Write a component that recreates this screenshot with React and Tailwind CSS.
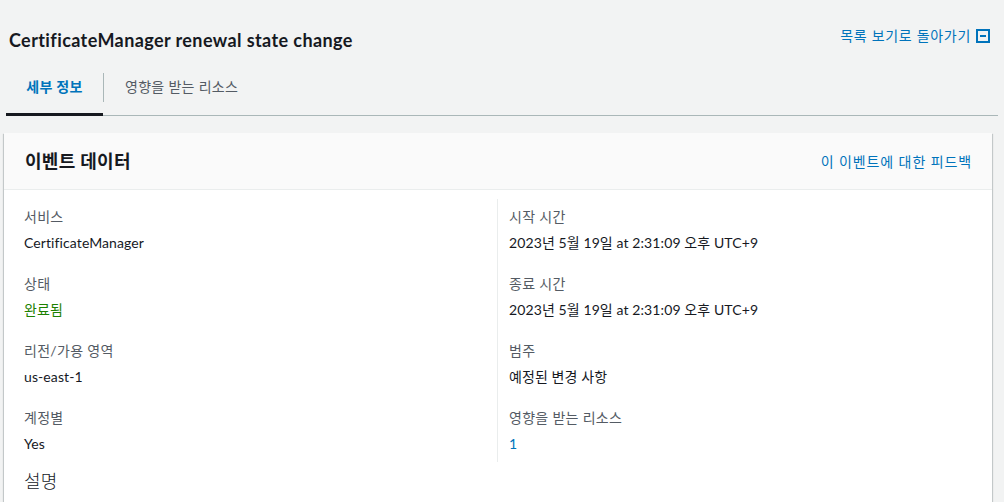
export default function App() {
  const left = [
    { label: "서비스", value: "CertificateManager" },
    { label: "상태", value: "완료됨", cls: "text-[#1d8102]" },
    { label: "리전/가용 영역", value: "us-east-1" },
    { label: "계정별", value: "Yes" },
  ];
  const right = [
    { label: "시작 시간", value: "2023년 5월 19일 at 2:31:09 오후 UTC+9" },
    { label: "종료 시간", value: "2023년 5월 19일 at 2:31:09 오후 UTC+9" },
    { label: "범주", value: "예정된 변경 사항" },
    { label: "영향을 받는 리소스", value: "1", cls: "text-[#0073bb]" },
  ];

  const Field = ({ label, value, cls, last }) => (
    <div className={last ? "" : "h-[67px]"}>
      <p className="text-[14px] leading-[20px] text-[#545b64] tracking-[0.3px]">{label}</p>
      <p className={`text-[14px] leading-[20px] mt-[6px] tracking-[0.1px] ${cls || "text-[#16191f]"}`}>{value}</p>
    </div>
  );

  return (
    <div
      className="w-[1004px] h-[502px] overflow-hidden bg-[#f2f3f3] text-[#16191f]"
      style={{ fontFamily: 'Lato, "Noto Sans CJK KR", sans-serif' }}
    >
      {/* Header */}
      <div className="flex justify-between pl-[9px] pr-[14px] pt-[27px]">
        <h1 className="text-[18px] leading-[26px] font-bold tracking-[0.4px]">CertificateManager renewal state change</h1>
        <a className="flex items-center gap-[5px] text-[14px] leading-[18px] tracking-[0.7px] text-[#0073bb] h-[18px]">
          목록 보기로 돌아가기
          <svg className="w-[14px] h-[14px]" viewBox="0 0 14 14">
            <rect x="1" y="1" width="12" height="12" fill="none" stroke="#0073bb" strokeWidth="2" />
            <rect x="4" y="6" width="6" height="2" fill="#0073bb" />
          </svg>
        </a>
      </div>

      {/* Tabs */}
      <div className="mx-[6px] mt-[17px] flex items-start border-b border-[#aab7b8] h-[46px]">
        <div className="w-[97px] h-[46px] pt-[7px] text-center border-b-[3px] border-[#16191f] text-[14px] leading-[20px] font-bold tracking-[0.3px] text-[#0073bb]">
          세부 정보
        </div>
        <div className="w-px h-[29px] mt-[3px] bg-[#aab7b8]" />
        <div className="pt-[7px] px-[21px] text-[14px] leading-[20px] tracking-[0.3px] text-[#545b64]">
          영향을 받는 리소스
        </div>
      </div>

      {/* Card */}
      <div className="ml-[4px] mr-[12px] mt-[17px] pb-[40px] bg-white shadow-[0_1px_1px_0_rgba(0,28,36,0.3),1px_1px_1px_0_rgba(0,28,36,0.15),-1px_1px_1px_0_rgba(0,28,36,0.15)]">
        <div className="h-[57px] bg-[#fafafa] border-b border-[#eaeded] flex items-center justify-between pl-[21px] pr-[20px]">
          <h2 className="text-[18px] font-bold leading-[26px] tracking-[0.3px]">이벤트 데이터</h2>
          <a className="text-[14px] text-[#0073bb] tracking-[0.9px]">이 이벤트에 대한 피드백</a>
        </div>
        <div className="pl-[20px] pr-[20px] mt-[9px] grid grid-cols-2">
          <div className="pt-[8px] pb-[8px] pr-[12px] border-r border-[#eaeded]">
            {left.map((f, i) => (
              <Field key={f.label} {...f} last={i === left.length - 1} />
            ))}
          </div>
          <div className="pt-[8px] pb-[8px] pl-[11px]">
            {right.map((f, i) => (
              <Field key={f.label} {...f} last={i === right.length - 1} />
            ))}
          </div>
        </div>
        <h3 className="pl-[20px] mt-[6px] text-[18px] leading-[26px] font-light tracking-[0.3px]">설명</h3>
      </div>
    </div>
  );
}
